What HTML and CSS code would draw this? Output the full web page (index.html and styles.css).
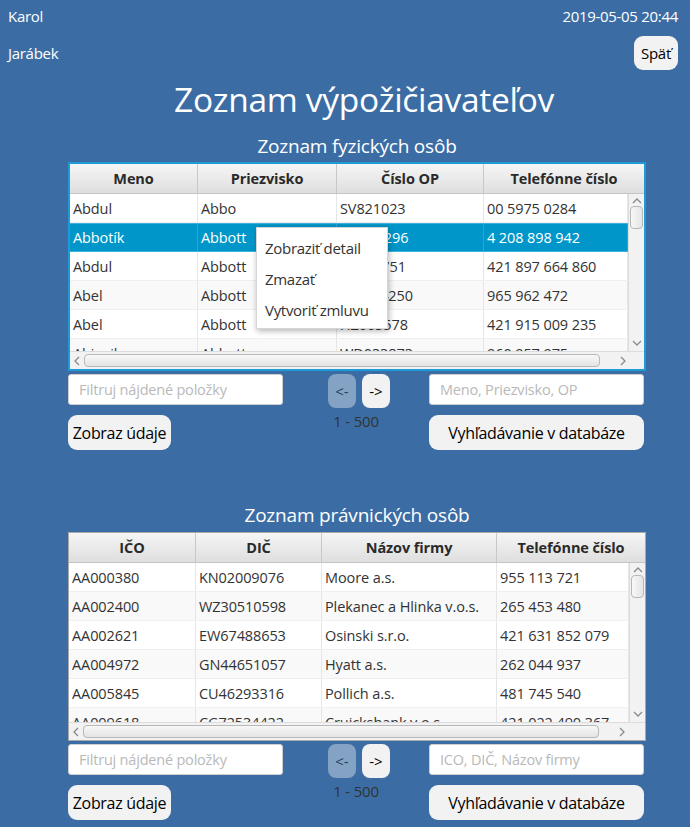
FILE: index.html
```html
<!DOCTYPE html>
<html lang="sk">
<head>
<meta charset="utf-8">
<title>Zoznam výpožičiavateľov</title>
<link rel="stylesheet" href="styles.css">
</head>
<body>
<div class="app">
  <div class="topbar">
    <span class="user">Karol</span>
    <span class="clock">2019-05-05 20:44</span>
  </div>
  <div class="second">
    <span class="user">Jarábek</span>
    <button class="btn back">Späť</button>
  </div>
  <h1 class="title">Zoznam výpožičiavateľov</h1>

  <section class="section">
    <h2 class="subtitle">Zoznam fyzických osôb</h2>
    <div class="table focused">
      <div class="thead cols-a">
        <div class="th">Meno</div>
        <div class="th">Priezvisko</div>
        <div class="th">Číslo OP</div>
        <div class="th">Telefónne číslo</div>
      </div>
      <div class="tbody">
        <div class="rows">
          <div class="tr cols-a"><div class="td">Abdul</div><div class="td">Abbo</div><div class="td">SV821023</div><div class="td">00 5975 0284</div></div>
          <div class="tr cols-a selected"><div class="td">Abbotík</div><div class="td">Abbott</div><div class="td">KD427296</div><div class="td">4 208 898 942</div></div>
          <div class="tr cols-a"><div class="td">Abdul</div><div class="td">Abbott</div><div class="td">RT930751</div><div class="td">421 897 664 860</div></div>
          <div class="tr cols-a"><div class="td">Abel</div><div class="td">Abbott</div><div class="td">MN204250</div><div class="td">965 962 472</div></div>
          <div class="tr cols-a"><div class="td">Abel</div><div class="td">Abbott</div><div class="td">HZ663578</div><div class="td">421 915 009 235</div></div>
          <div class="tr cols-a"><div class="td">Abigail</div><div class="td">Abbott</div><div class="td">WD033873</div><div class="td">960 957 975</div></div>
        </div>
        <div class="vscroll">
          <svg class="arr" width="14" height="10" viewBox="0 0 14 10"><path d="M3 7 L7 3 L11 7" fill="none" stroke="#8a8a8a" stroke-width="1.3"/></svg>
          <div class="vthumb"></div>
          <div class="vspace"></div>
          <svg class="arr" width="14" height="10" viewBox="0 0 14 10"><path d="M3 3 L7 7 L11 3" fill="none" stroke="#8a8a8a" stroke-width="1.3"/></svg>
        </div>
      </div>
      <div class="hscroll">
        <svg class="harr" width="10" height="14" viewBox="0 0 10 14"><path d="M7 3 L3 7 L7 11" fill="none" stroke="#8a8a8a" stroke-width="1.3"/></svg>
        <div class="hthumb"></div>
        <svg class="harr" width="10" height="14" viewBox="0 0 10 14"><path d="M3 3 L7 7 L3 11" fill="none" stroke="#8a8a8a" stroke-width="1.3"/></svg>
        <div class="corner"></div>
      </div>
      <div class="menu">
        <div class="mi">Zobraziť detail</div>
        <div class="mi">Zmazať</div>
        <div class="mi">Vytvoriť zmluvu</div>
      </div>
    </div>
    <div class="controls">
      <div class="col">
        <input class="field" type="text" placeholder="Filtruj nájdené položky">
        <button class="btn wide-l">Zobraz údaje</button>
      </div>
      <div class="pager">
        <div class="pbtns">
          <button class="btn pb disabled">&lt;-</button>
          <button class="btn pb">-&gt;</button>
        </div>
        <div class="count">1 - 500</div>
      </div>
      <div class="col">
        <input class="field" type="text" placeholder="Meno, Priezvisko, OP">
        <button class="btn wide-r">Vyhľadávanie v databáze</button>
      </div>
    </div>
  </section>

  <section class="section second-sec">
    <h2 class="subtitle">Zoznam právnických osôb</h2>
    <div class="table plain">
      <div class="thead cols-b">
        <div class="th">IČO</div>
        <div class="th">DIČ</div>
        <div class="th">Názov firmy</div>
        <div class="th">Telefónne číslo</div>
      </div>
      <div class="tbody">
        <div class="rows">
          <div class="tr cols-b"><div class="td">AA000380</div><div class="td">KN02009076</div><div class="td">Moore a.s.</div><div class="td">955 113 721</div></div>
          <div class="tr cols-b"><div class="td">AA002400</div><div class="td">WZ30510598</div><div class="td">Plekanec a Hlinka v.o.s.</div><div class="td">265 453 480</div></div>
          <div class="tr cols-b"><div class="td">AA002621</div><div class="td">EW67488653</div><div class="td">Osinski s.r.o.</div><div class="td">421 631 852 079</div></div>
          <div class="tr cols-b"><div class="td">AA004972</div><div class="td">GN44651057</div><div class="td">Hyatt a.s.</div><div class="td">262 044 937</div></div>
          <div class="tr cols-b"><div class="td">AA005845</div><div class="td">CU46293316</div><div class="td">Pollich a.s.</div><div class="td">481 745 540</div></div>
          <div class="tr cols-b"><div class="td">AA009618</div><div class="td">CG72534422</div><div class="td">Cruickshank v.o.s.</div><div class="td">421 022 490 367</div></div>
        </div>
        <div class="vscroll">
          <svg class="arr" width="14" height="10" viewBox="0 0 14 10"><path d="M3 7 L7 3 L11 7" fill="none" stroke="#8a8a8a" stroke-width="1.3"/></svg>
          <div class="vthumb"></div>
          <div class="vspace"></div>
          <svg class="arr" width="14" height="10" viewBox="0 0 14 10"><path d="M3 3 L7 7 L11 3" fill="none" stroke="#8a8a8a" stroke-width="1.3"/></svg>
        </div>
      </div>
      <div class="hscroll">
        <svg class="harr" width="10" height="14" viewBox="0 0 10 14"><path d="M7 3 L3 7 L7 11" fill="none" stroke="#8a8a8a" stroke-width="1.3"/></svg>
        <div class="hthumb"></div>
        <svg class="harr" width="10" height="14" viewBox="0 0 10 14"><path d="M3 3 L7 7 L3 11" fill="none" stroke="#8a8a8a" stroke-width="1.3"/></svg>
        <div class="corner"></div>
      </div>
    </div>
    <div class="controls">
      <div class="col">
        <input class="field" type="text" placeholder="Filtruj nájdené položky">
        <button class="btn wide-l">Zobraz údaje</button>
      </div>
      <div class="pager">
        <div class="pbtns">
          <button class="btn pb disabled">&lt;-</button>
          <button class="btn pb">-&gt;</button>
        </div>
        <div class="count">1 - 500</div>
      </div>
      <div class="col">
        <input class="field" type="text" placeholder="ICO, DIČ, Názov firmy">
        <button class="btn wide-r">Vyhľadávanie v databáze</button>
      </div>
    </div>
  </section>
</div>
</body>
</html>
```

FILE: styles.css
```css
* { box-sizing: border-box; }
html, body {
  margin: 0;
  padding: 0;
  background: #3b6da4;
}
body {
  font-family: "Open Sans", "Noto Sans", sans-serif;
  color: #333;
  width: 690px;
  height: 827px;
  overflow: hidden;
}
.app {
  display: flex;
  flex-direction: column;
}
.topbar {
  height: 32px;
  display: flex;
  justify-content: space-between;
  align-items: center;
  padding: 0 12px 0 8px;
  color: #fff;
}
.second {
  height: 38px;
  display: flex;
  justify-content: space-between;
  align-items: center;
  padding: 0 12px 0 8px;
  margin-top: 2px;
}
.user, .clock {
  color: #fff;
  font-size: 15px;
  letter-spacing: -0.3px;
}
.btn {
  font-family: "Open Sans", "Noto Sans", sans-serif;
  background: #f2f2f2;
  border: none;
  border-radius: 9px;
  color: #000;
  padding: 0;
  cursor: default;
}
.back {
  width: 44px;
  height: 34px;
  font-size: 15px;
  letter-spacing: -0.3px;
}
.title {
  margin: 4px 0 0 0;
  height: 46px;
  line-height: 46px;
  padding-left: 38px;
  text-align: center;
  color: #fff;
  font-weight: 400;
  font-size: 33.5px;
  letter-spacing: -0.3px;
}
.section {
  margin-left: 68px;
  width: 578px;
  display: flex;
  flex-direction: column;
}
.subtitle {
  margin: 8px 0 0 0;
  height: 32px;
  line-height: 32px;
  text-align: center;
  color: #fff;
  font-weight: 400;
  font-size: 19px;
  letter-spacing: -0.2px;
}
.second-sec { margin-top: 51px; }
.second-sec .subtitle { margin-top: 0; height: 31px; line-height: 29px; }

.table {
  position: relative;
  height: 209px;
  background: #fff;
  display: flex;
  flex-direction: column;
}
.table.focused { border: 2px solid #1e9ad7; }
.table.plain { border: 1px solid #a9a9a9; }

.cols-a {
  display: grid;
  grid-template-columns: 128px 139px 147px 1fr;
}
.cols-b {
  display: grid;
  grid-template-columns: 127px 126px 175px 1fr;
}

.thead {
  height: 30px;
  background: linear-gradient(#f6f6f6, #dedede);
  border-bottom: 1px solid #c4c4c4;
  flex: none;
}
.th {
  font-weight: 700;
  font-size: 14.5px;
  color: #2a2a2a;
  display: flex;
  align-items: center;
  justify-content: center;
  border-right: 1px solid #c8c8c8;
  letter-spacing: -0.1px;
}
.th:last-child { border-right: none; }

.tbody {
  flex: 1;
  display: flex;
  overflow: hidden;
  min-height: 0;
}
.rows {
  flex: 1;
  overflow: hidden;
}
.tr {
  height: 29px;
  border-bottom: 1px solid #efefef;
  background: #fff;
}
.tr:nth-child(even) { background: #f9f9f9; }
.td {
  font-size: 14.5px;
  color: #333;
  padding-left: 3px;
  display: flex;
  align-items: center;
  border-right: 1px solid #e6e6e6;
  white-space: nowrap;
  overflow: hidden;
  letter-spacing: -0.1px;
}
.tr.selected {
  background: #0096c9;
  border-top: 1px solid #3fb0de;
  border-bottom: 1px solid #3fb0de;
}
.tr.selected .td {
  color: #fff;
  border-right-color: #2aa6d6;
}

.vscroll {
  width: 16px;
  flex: none;
  background: #f2f2f2;
  border-left: 1px solid #dcdcdc;
  display: flex;
  flex-direction: column;
  align-items: center;
}
.arr { flex: none; margin-top: 2px; }
.vthumb {
  width: 13px;
  height: 23px;
  border: 1px solid #b8b8b8;
  border-radius: 4px;
  background: linear-gradient(90deg, #f8f8f8, #e4e4e4);
  flex: none;
}
.vspace { flex: 1; }
.vscroll .arr:last-child { margin: 0 0 3px 0; }

.hscroll {
  height: 18px;
  flex: none;
  background: #f2f2f2;
  border-top: 1px solid #dcdcdc;
  display: flex;
  align-items: center;
}
.harr { flex: none; margin: 0 2px 0 2px; }
.hthumb {
  width: 516px;
  height: 13px;
  border: 1px solid #b8b8b8;
  border-radius: 4px;
  background: linear-gradient(#f8f8f8, #e4e4e4);
  flex: none;
}
.hscroll .harr:nth-of-type(2) { margin-left: 18px; }
.corner { flex: 1; }

.menu {
  position: absolute;
  left: 186px;
  top: 63px;
  width: 132px;
  height: 102px;
  background: #fff;
  border: 1px solid #d6d6d6;
  box-shadow: 1px 2px 6px rgba(0, 0, 0, 0.3);
  padding-top: 5px;
}
.mi {
  height: 31px;
  line-height: 31px;
  padding-left: 8px;
  font-size: 15px;
  color: #333;
  letter-spacing: -0.3px;
  white-space: nowrap;
}

.controls {
  display: grid;
  grid-template-columns: 215px 1fr 215px;
  padding-right: 2px;
  margin-top: 3px;
}
.col {
  display: flex;
  flex-direction: column;
  gap: 10px;
}
.field {
  height: 31px;
  width: 100%;
  border: 1px solid #cfcfcf;
  border-radius: 3px;
  background: #fff;
  padding: 0 10px;
  font-family: "Open Sans", "Noto Sans", sans-serif;
  font-size: 14.5px;
  outline: none;
}
.field::placeholder { color: #b9b9b9; letter-spacing: -0.2px; }
.wide-l {
  width: 103px;
  height: 35px;
  font-size: 16px;
  letter-spacing: -0.3px;
}
.wide-r {
  width: 215px;
  height: 35px;
  font-size: 16px;
  letter-spacing: -0.3px;
}
.pager {
  display: flex;
  flex-direction: column;
  align-items: center;
}
.pbtns {
  display: flex;
  gap: 6px;
  margin-left: 6px;
}
.pb {
  width: 28px;
  height: 34px;
  font-size: 15px;
  border-radius: 8px;
}
.pb.disabled { opacity: 0.4; }
.count {
  margin-top: 3px;
  font-size: 15px;
  color: #333;
  letter-spacing: -0.2px;
}
```
